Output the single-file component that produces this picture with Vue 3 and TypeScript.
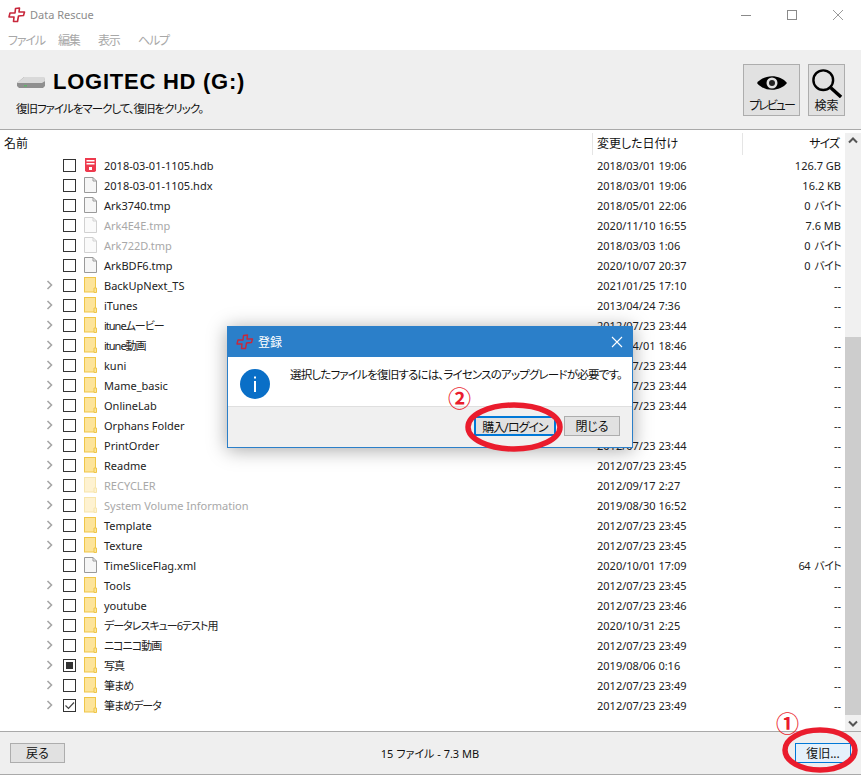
<template>
  <div class="window">
    <div class="titlebar">
      <svg class="logo" width="18" height="16" viewBox="0 0 18 16">
        <path d="M7.5 1.5 L11.5 1 L11 5 L16.5 5 L15.5 8.5 L10.5 9 L9.5 14.5 L5.5 14.5 L6 10 L1 10 L2 6 L7 6 Z" fill="#fff" stroke="#c8283c" stroke-width="1.6" stroke-linejoin="round" />
      </svg>
      <span class="app-name">Data Rescue</span>
      <div class="win-buttons">
        <svg width="12" height="12" viewBox="0 0 12 12"><path d="M1 6.5H11" stroke="#8a8a8a" /></svg>
        <svg width="12" height="12" viewBox="0 0 12 12"><rect x="1.5" y="1.5" width="9" height="9" fill="none" stroke="#8a8a8a" /></svg>
        <svg width="12" height="12" viewBox="0 0 12 12"><path d="M1 1L11 11M11 1L1 11" stroke="#9a9a9a" /></svg>
      </div>
    </div>
    <div class="menubar">
      <span v-for="m in menus" :key="m">{{ m }}</span>
    </div>

    <header class="toolbar">
      <div class="drive">
        <div class="drive-title">
          <svg width="30" height="15" viewBox="0 0 30 15">
            <path d="M1 8 L8 2 L28 2 L29 7 L29 11 L27 13 L3 13 L1 11 Z" fill="#8f8f8f" />
            <path d="M8 2 L28 2 L29 6 L26 8 L1 8 Z" fill="#d9d9d9" />
            <rect x="8" y="10" width="3" height="1.5" fill="#5fb56a" />
          </svg>
          <h1>LOGITEC HD (G:)</h1>
        </div>
        <p>復旧ファイルをマークして、復旧をクリック。</p>
      </div>
      <div class="tools">
        <button class="tool preview">
          <svg class="eye" width="32" height="16" viewBox="0 0 32 16">
            <path d="M1 8 C8 -1 24 -1 31 8 C24 17 8 17 1 8 Z" fill="#000" />
            <circle cx="16" cy="8" r="5.5" fill="#e1e1e1" />
            <circle cx="16" cy="8" r="3" fill="#222" />
          </svg>
          <span>プレビュー</span>
        </button>
        <button class="tool search">
          <svg width="32" height="30" viewBox="0 0 34 32">
            <circle cx="13" cy="13" r="10.5" fill="none" stroke="#000" stroke-width="2.6" />
            <path d="M21 21 L32 31" stroke="#000" stroke-width="3.6" />
          </svg>
          <span>検索</span>
        </button>
      </div>
    </header>

    <div class="list">
      <div class="list-main">
        <div class="columns">
          <span class="col-name">名前</span>
          <span class="col-date">変更した日付け</span>
          <span class="col-size">サイズ</span>
        </div>
        <div class="rows">
          <div v-for="row in rows" :key="row.name" class="row" :class="{ dim: row.dim }">
            <span class="chevron">
              <svg v-if="row.type === 'folder'" width="8" height="10" viewBox="0 0 8 10"><path d="M1.5 1 L5.5 5 L1.5 9" fill="none" stroke="#a6a6a6" stroke-width="1.6" /></svg>
            </span>
            <span class="check" :class="{ mixed: row.mark === 'mixed' }">
              <svg v-if="row.mark === 'checked'" width="11" height="11" viewBox="0 0 11 11"><path d="M1.5 5.5 L4.5 8.5 L10 2.5" fill="none" stroke="#444" stroke-width="1.2" /></svg>
            </span>
            <svg v-if="row.type === 'folder'" class="icon" width="13" height="16" viewBox="0 0 13 16">
              <rect x="0.5" y="0.5" width="11" height="14.5" fill="#fde49a" stroke="#efc648" />
              <path d="M10 11 H12.5 V15.5 H10 Z" fill="#fde49a" stroke="#efc648" />
            </svg>
            <svg v-else-if="row.type === 'hdb'" class="icon" width="13" height="16" viewBox="0 0 13 16">
              <path d="M1 1 H12 V14 L10.5 15 H2.5 L1 14 Z" fill="#ee3a4e" />
              <rect x="2.5" y="3" width="8" height="1.5" fill="#fff" />
              <rect x="2.5" y="6" width="8" height="1.5" fill="#fff" />
              <rect x="5" y="10" width="3" height="3" fill="#fff" />
            </svg>
            <svg v-else class="icon" width="13" height="16" viewBox="0 0 13 16">
              <path d="M0.5 0.5 H9 L12.5 4 V15.5 H0.5 Z" fill="#f6f6f6" stroke="#9a9a9a" />
              <path d="M9 0.5 V4 H12.5" fill="none" stroke="#9a9a9a" />
            </svg>
            <span class="name" :class="{ jp: isJapanese(row.name) }">{{ row.name }}</span>
            <span class="date">{{ row.date }}</span>
            <span class="size" :class="{ jp: isJapanese(row.size) }">{{ row.size }}</span>
          </div>
        </div>
      </div>
      <div class="scrollbar">
        <svg width="16" height="16" viewBox="0 0 16 16"><path d="M4 9.5 L8 5.5 L12 9.5" fill="none" stroke="#555" stroke-width="2" /></svg>
        <div class="track"><div class="thumb"></div></div>
        <svg width="16" height="16" viewBox="0 0 16 16"><path d="M4 6.5 L8 10.5 L12 6.5" fill="none" stroke="#555" stroke-width="2" /></svg>
      </div>
    </div>

    <footer class="footer">
      <button class="btn back">戻る</button>
      <span class="summary">15 ファイル - 7.3 MB</span>
      <button class="btn recover">復旧...</button>
    </footer>

    <div class="dialog">
      <div class="dialog-title">
        <svg width="18" height="16" viewBox="0 0 18 16">
          <path d="M7.5 1.5 L11.5 1 L11 5 L16.5 5 L15.5 8.5 L10.5 9 L9.5 14.5 L5.5 14.5 L6 10 L1 10 L2 6 L7 6 Z" fill="#2b7fc9" stroke="#c8283c" stroke-width="1.4" stroke-linejoin="round" />
        </svg>
        <span>登録</span>
        <svg class="dialog-close" width="12" height="12" viewBox="0 0 12 12"><path d="M1 1L11 11M11 1L1 11" stroke="#fff" stroke-width="1.1" /></svg>
      </div>
      <div class="dialog-body">
        <svg class="info" width="30" height="30" viewBox="0 0 30 30">
          <circle cx="15" cy="15" r="15" fill="#0a6fc7" />
          <rect x="14" y="12" width="2" height="11" fill="#fff" />
          <rect x="14" y="7.5" width="2" height="2" fill="#fff" />
        </svg>
        <p>選択したファイルを復旧するには、ライセンスのアップグレードが必要です。</p>
      </div>
      <div class="dialog-footer">
        <button class="btn buy">購入/ログイン</button>
        <button class="btn close">閉じる</button>
      </div>
    </div>

    <svg class="ring ring-buy" width="100" height="52" viewBox="0 0 100 52">
      <ellipse cx="50" cy="26" rx="46" ry="22" fill="none" stroke="#ea1c2d" stroke-width="5.5" />
    </svg>
    <svg class="ring ring-recover" width="84" height="50" viewBox="0 0 84 50">
      <ellipse cx="42" cy="25" rx="35" ry="20" fill="none" stroke="#ea1c2d" stroke-width="5.5" />
    </svg>
    <span class="step step-one">①</span>
    <span class="step step-two">②</span>
  </div>
</template>

<script setup lang="ts">
type Row = {
  name: string
  date: string
  size: string
  type: 'file' | 'hdb' | 'folder'
  dim?: boolean
  mark?: 'checked' | 'mixed'
}

const menus = ['ファイル', '編集', '表示', 'ヘルプ']

const isJapanese = (text: string) => /[^\x00-\x7f]/.test(text)

const folder = (name: string, date: string, extra: Partial<Row> = {}): Row => ({
  name,
  date,
  size: '--',
  type: 'folder',
  ...extra,
})

const rows: Row[] = [
  { name: '2018-03-01-1105.hdb', date: '2018/03/01 19:06', size: '126.7 GB', type: 'hdb' },
  { name: '2018-03-01-1105.hdx', date: '2018/03/01 19:06', size: '16.2 KB', type: 'file' },
  { name: 'Ark3740.tmp', date: '2018/05/01 22:06', size: '0 バイト', type: 'file' },
  { name: 'Ark4E4E.tmp', date: '2020/11/10 16:55', size: '7.6 MB', type: 'file', dim: true },
  { name: 'Ark722D.tmp', date: '2018/03/03 1:06', size: '0 バイト', type: 'file', dim: true },
  { name: 'ArkBDF6.tmp', date: '2020/10/07 20:37', size: '0 バイト', type: 'file' },
  folder('BackUpNext_TS', '2021/01/25 17:10'),
  folder('iTunes', '2013/04/24 7:36'),
  folder('ituneムービー', '2012/07/23 23:44'),
  folder('itune動画', '2014/04/01 18:46'),
  folder('kuni', '2012/07/23 23:44'),
  folder('Mame_basic', '2012/07/23 23:44'),
  folder('OnlineLab', '2012/07/23 23:44'),
  folder('Orphans Folder', ''),
  folder('PrintOrder', '2012/07/23 23:44'),
  folder('Readme', '2012/07/23 23:45'),
  folder('RECYCLER', '2012/09/17 2:27', { dim: true }),
  folder('System Volume Information', '2019/08/30 16:52', { dim: true }),
  folder('Template', '2012/07/23 23:45'),
  folder('Texture', '2012/07/23 23:45'),
  { name: 'TimeSliceFlag.xml', date: '2020/10/01 17:09', size: '64 バイト', type: 'file' },
  folder('Tools', '2012/07/23 23:45'),
  folder('youtube', '2012/07/23 23:46'),
  folder('データレスキュー6テスト用', '2020/10/31 2:25'),
  folder('ニコニコ動画', '2012/07/23 23:49'),
  folder('写真', '2019/08/06 0:16', { mark: 'mixed' }),
  folder('筆まめ', '2012/07/23 23:49'),
  folder('筆まめデータ', '2012/07/23 23:49', { mark: 'checked' }),
]
</script>

<style>
body {
  background: #fff;
}
</style>

<style scoped>
.window {
  position: relative;
  width: 861px;
  height: 775px;
  display: flex;
  flex-direction: column;
  overflow: hidden;
  background: #fff;
  color: #111;
  font-family: "Noto Sans", "Noto Sans CJK JP", sans-serif;
  font-size: 12px;
  font-feature-settings: "palt";
}

button {
  font-family: inherit;
  font-size: 12px;
  font-feature-settings: "palt";
  color: #111;
  padding: 0;
  white-space: nowrap;
}

.titlebar {
  height: 30px;
  flex: none;
  display: flex;
  align-items: center;
  padding: 0 0 1px 8px;
  box-sizing: border-box;
  gap: 4px;
}
.app-name {
  color: #8c8c8c;
  font-size: 11px;
}
.win-buttons {
  margin-left: auto;
  display: flex;
  gap: 34px;
  padding-right: 17px;
}

.menubar {
  height: 20px;
  flex: none;
  display: grid;
  grid-template-columns: 50px 40px 40px 40px;
  align-items: center;
  padding-left: 8px;
  color: #a8a8a8;
  letter-spacing: -1.2px;
}

.toolbar {
  height: 80px;
  flex: none;
  box-sizing: border-box;
  background: #efefef;
  border-bottom: 1px solid #a9a9a9;
  display: flex;
  justify-content: space-between;
  padding: 14px 16px 0 16px;
}
.drive-title {
  display: flex;
  align-items: center;
  gap: 7px;
  height: 36px;
}
.drive-title h1 {
  margin: 0;
  font-family: "Liberation Sans", "Noto Sans CJK JP", sans-serif;
  font-size: 22px;
  font-weight: 700;
  letter-spacing: 0.75px;
  color: #000;
}
.drive p {
  margin: 0;
  line-height: 18px;
  color: #111;
  font-size: 11.5px;
  letter-spacing: -1px;
}
.tools {
  display: flex;
  gap: 8px;
}
.tool {
  height: 52px;
  box-sizing: border-box;
  background: #e1e1e1;
  border: 1px solid #adadad;
  display: flex;
  flex-direction: column;
  align-items: center;
  justify-content: flex-end;
  padding-bottom: 1px;
}
.tool span {
  line-height: 16px;
}
.eye {
  margin-bottom: 7px;
}
.preview {
  width: 57px;
  letter-spacing: -2px;
}
.search {
  width: 37px;
}

.list {
  flex: 1;
  min-height: 0;
  display: flex;
}
.list-main {
  flex: 1;
  min-width: 0;
  padding-top: 1px;
}
.columns {
  height: 25px;
  display: flex;
  align-items: flex-end;
  padding-bottom: 1px;
  box-sizing: border-box;
}
.col-name {
  width: 593px;
  box-sizing: border-box;
  padding-left: 4px;
  border-right: 1px solid #e5e5e5;
  line-height: 22px;
}
.col-date {
  width: 150px;
  box-sizing: border-box;
  padding-left: 4px;
  border-right: 1px solid #e5e5e5;
  line-height: 22px;
}
.col-size {
  flex: 1;
  text-align: right;
  padding-right: 6px;
  line-height: 22px;
  letter-spacing: -1px;
}
.rows {
  display: flex;
  flex-direction: column;
  margin-top: -1px;
}
.row {
  height: 20px;
  display: flex;
  align-items: center;
  color: #222;
  font-size: 11px;
}
.chevron {
  width: 12px;
  margin-left: 46px;
  margin-right: 5px;
  display: flex;
}
.check {
  width: 13px;
  height: 13px;
  box-sizing: border-box;
  border: 1px solid #333;
  display: flex;
  align-items: center;
  justify-content: center;
  flex: none;
  background: #fff;
}
.check.mixed::after {
  content: "";
  width: 7px;
  height: 7px;
  background: #333;
}
.icon {
  margin-left: 8px;
  flex: none;
}
.name {
  margin-left: 7px;
  width: 493px;
  white-space: nowrap;
}
.name.jp {
  letter-spacing: -1px;
}
.date {
  width: 146px;
}
.size {
  flex: 1;
  text-align: right;
  padding-right: 4px;
}
.size.jp {
  letter-spacing: -0.6px;
  word-spacing: 2px;
}
.dim .name {
  color: #a8a8a8;
}
.dim .icon {
  opacity: 0.45;
}

.scrollbar {
  width: 16px;
  background: #f0f0f0;
  display: flex;
  flex-direction: column;
  margin-top: 3px;
}
.track {
  flex: 1;
  display: flex;
  flex-direction: column;
  justify-content: flex-end;
}
.thumb {
  height: 378px;
  background: #cdcdcd;
}

.footer {
  height: 44px;
  flex: none;
  box-sizing: border-box;
  background: #efefef;
  border-top: 1px solid #a9a9a9;
  border-bottom: 1px solid #a9a9a9;
  display: flex;
  align-items: center;
  justify-content: space-between;
  padding: 0 10px;
}
.btn {
  height: 20px;
  box-sizing: border-box;
  background: #e1e1e1;
  border: 1px solid #adadad;
}
.back {
  width: 55px;
}
.recover {
  width: 56px;
  background: #e5f1fb;
  border: 1px solid #0078d7;
}
.summary {
  font-size: 11px;
}

.dialog {
  position: absolute;
  left: 227px;
  top: 326px;
  width: 406px;
  height: 122px;
  box-sizing: border-box;
  border: 1px solid #2b7fc9;
  background: #fff;
  box-shadow: 0 2px 18px rgba(0, 0, 0, 0.35);
  display: flex;
  flex-direction: column;
}
.dialog-title {
  height: 30px;
  flex: none;
  background: #2b7fc9;
  color: #fff;
  display: flex;
  align-items: center;
  gap: 4px;
  padding-left: 8px;
}
.dialog-close {
  margin-left: auto;
  margin-right: 9px;
}
.dialog-body {
  height: 50px;
  flex: none;
  display: flex;
  align-items: flex-start;
  padding: 12px 0 0 12px;
  border-bottom: 1px solid #dfdfdf;
  box-sizing: border-box;
}
.info {
  flex: none;
}
.dialog-body p {
  margin: -3px 0 0 20px;
  color: #111;
  font-size: 11.5px;
  letter-spacing: -0.8px;
  white-space: nowrap;
}
.dialog-footer {
  flex: 1;
  background: #f0f0f0;
  display: flex;
  justify-content: flex-end;
  align-items: center;
  gap: 8px;
  padding: 0 12px 2px 0;
}
.buy {
  width: 82px;
  border: 2px solid #0078d7;
  letter-spacing: -1px;
}
.close {
  width: 56px;
}

.ring {
  position: absolute;
}
.ring-buy {
  left: 464px;
  top: 401px;
}
.ring-recover {
  left: 778px;
  top: 725px;
}
.step {
  position: absolute;
  color: #ea1c2d;
  font-size: 23px;
  font-weight: 700;
  line-height: 24px;
  font-family: "Noto Sans CJK JP", sans-serif;
}
.step-one {
  left: 776px;
  top: 710px;
}
.step-two {
  left: 448px;
  top: 385px;
}
</style>
